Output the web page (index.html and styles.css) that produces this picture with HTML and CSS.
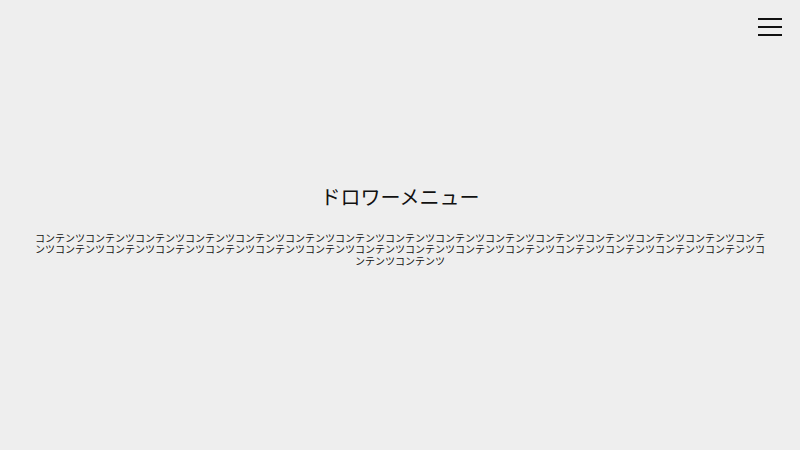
FILE: index.html
```html
<!DOCTYPE html>
<html lang="ja">
<head>
<meta charset="utf-8">
<title>ドロワーメニュー</title>
<link rel="stylesheet" href="styles.css">
</head>
<body>
<button class="hamburger" aria-label="メニュー">
  <span class="bar"></span>
  <span class="bar"></span>
  <span class="bar"></span>
</button>
<main class="main">
  <h1 class="title">ドロワーメニュー</h1>
  <p class="content">コンテンツコンテンツコンテンツコンテンツコンテンツコンテンツコンテンツコンテンツコンテンツコンテンツコンテンツコンテンツコンテンツコンテンツコンテンツコンテンツコンテンツコンテンツコンテンツコンテンツコンテンツコンテンツコンテンツコンテンツコンテンツコンテンツコンテンツコンテンツコンテンツコンテンツコンテンツ</p>
</main>
</body>
</html>
```
FILE: styles.css
```css
html, body {
  margin: 0;
  padding: 0;
  height: 100%;
}
body {
  background: #eeeeee;
  color: #111111;
  font-family: "Noto Sans CJK JP", "Noto Sans", sans-serif;
}
.main {
  height: 100%;
  display: flex;
  flex-direction: column;
  align-items: center;
  justify-content: center;
}
.title {
  margin: 0 0 22px;
  font-size: 20px;
  font-weight: normal;
  line-height: 26px;
}
.content {
  margin: 0;
  width: 736px;
  font-size: 10px;
  line-height: 11.5px;
  text-align: center;
}
.hamburger {
  position: absolute;
  top: 12px;
  right: 14px;
  width: 32px;
  height: 30px;
  padding: 0 4px;
  border: none;
  background: transparent;
  display: flex;
  flex-direction: column;
  justify-content: center;
  gap: 6px;
  cursor: pointer;
}
.bar {
  display: block;
  width: 24px;
  height: 2px;
  background: #111111;
}
```
